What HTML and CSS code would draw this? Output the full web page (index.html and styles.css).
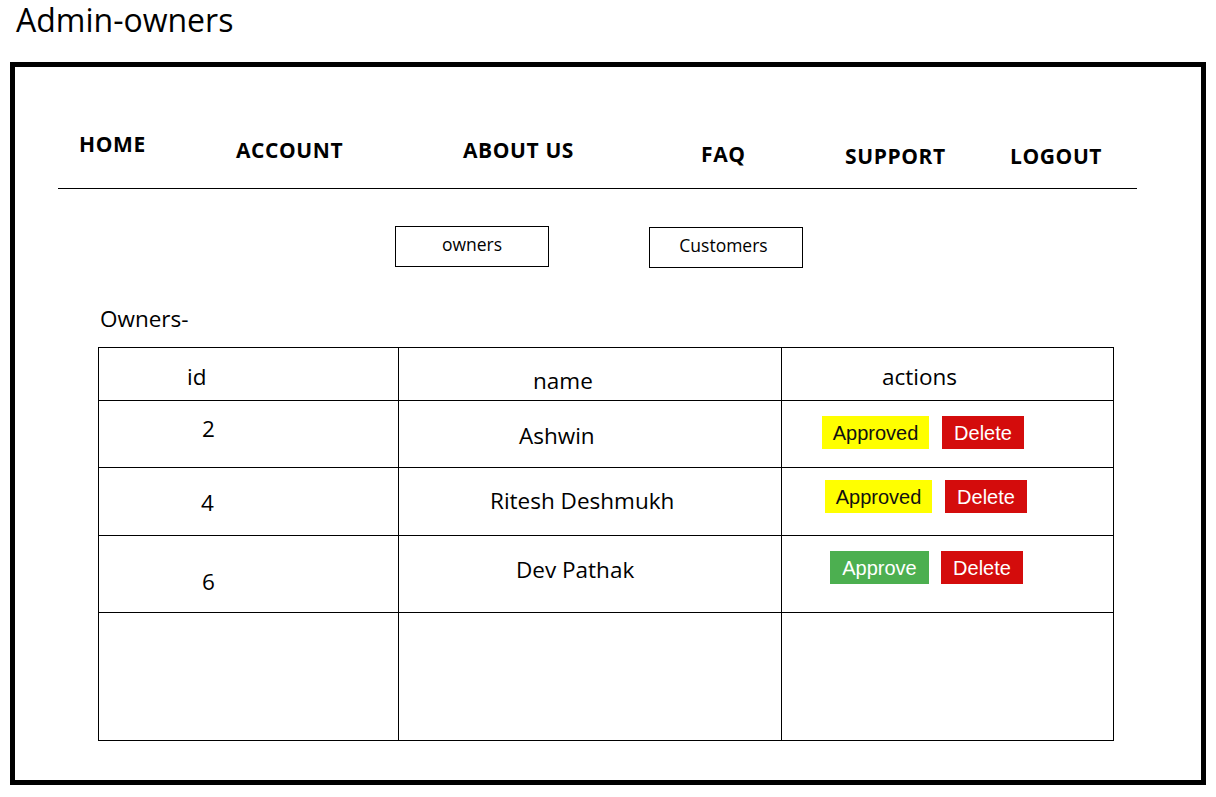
FILE: index.html
```html
<!DOCTYPE html>
<html lang="en">
<head>
<meta charset="utf-8">
<title>Admin-owners</title>
<link rel="stylesheet" href="styles.css">
</head>
<body>
<h1 class="page-title">Admin-owners</h1>
<div class="frame">
  <nav class="nav">
    <a class="nav-item n-home">HOME</a>
    <a class="nav-item n-account">ACCOUNT</a>
    <a class="nav-item n-about">ABOUT US</a>
    <a class="nav-item n-faq">FAQ</a>
    <a class="nav-item n-support">SUPPORT</a>
    <a class="nav-item n-logout">LOGOUT</a>
  </nav>
  <div class="nav-rule"></div>
  <div class="tabs">
    <button class="tab tab-owners">owners</button>
    <button class="tab tab-customers">Customers</button>
  </div>
  <div class="section-label">Owners-</div>
  <div class="grid">
    <div class="cell"><span class="txt h-id">id</span></div>
    <div class="cell"><span class="txt h-name">name</span></div>
    <div class="cell"><span class="txt h-actions">actions</span></div>

    <div class="cell"><span class="txt r1-id">2</span></div>
    <div class="cell"><span class="txt r1-name">Ashwin</span></div>
    <div class="cell"><div class="actions r1-act"><span class="btn btn-approved">Approved</span><span class="btn btn-delete">Delete</span></div></div>

    <div class="cell"><span class="txt r2-id">4</span></div>
    <div class="cell"><span class="txt r2-name">Ritesh Deshmukh</span></div>
    <div class="cell"><div class="actions r2-act"><span class="btn btn-approved">Approved</span><span class="btn btn-delete">Delete</span></div></div>

    <div class="cell"><span class="txt r3-id">6</span></div>
    <div class="cell"><span class="txt r3-name">Dev Pathak</span></div>
    <div class="cell"><div class="actions r3-act"><span class="btn btn-approve">Approve</span><span class="btn btn-delete">Delete</span></div></div>

    <div class="cell"></div>
    <div class="cell"></div>
    <div class="cell"></div>
  </div>
</div>
</body>
</html>
```

FILE: styles.css
```css
* { box-sizing: border-box; }
html, body { margin: 0; padding: 0; background: #fff; }
body {
  font-family: "Open Sans", "Noto Sans", sans-serif;
  color: #000;
  width: 1216px;
  height: 797px;
  overflow: hidden;
}
.page-title {
  margin: 0;
  padding-left: 16px;
  font-weight: 400;
  font-size: 32px;
  line-height: 40px;
  height: 40px;
}
.frame {
  margin: 22px 0 0 10px;
  width: 1196px;
  height: 723px;
  border: 5px solid #000;
}
.nav {
  display: flex;
  align-items: flex-start;
  height: 121px;
  padding: 65px 0 0 64px;
}
.nav-item {
  font-weight: 700;
  font-size: 21px;
  letter-spacing: 0.6px;
  line-height: 24px;
  white-space: nowrap;
}
.n-home { width: 157px; }
.n-account { width: 227px; margin-top: 6px; }
.n-about { width: 238px; margin-top: 6px; }
.n-faq { width: 144px; margin-top: 10px; }
.n-support { width: 165px; margin-top: 12px; }
.n-logout { margin-top: 12px; }
.nav-rule {
  margin-left: 43px;
  width: 1079px;
  border-top: 1px solid #000;
}
.tabs {
  display: flex;
  align-items: flex-start;
  gap: 100px;
  margin-top: 37px;
  padding-left: 380px;
}
.tab {
  width: 154px;
  height: 41px;
  border: 1px solid #000;
  background: #fff;
  font-family: "Open Sans", "Noto Sans", sans-serif;
  font-size: 17.5px;
  color: #000;
  padding: 0 0 5px 0;
  line-height: 24px;
}
.tab-customers { margin-top: 1px; padding-right: 5px; }
.section-label {
  margin-top: 37px;
  padding-left: 85px;
  font-size: 22.5px;
  line-height: 28px;
}
.grid {
  margin: 14px 0 0 83px;
  display: grid;
  grid-template-columns: 300px 383px 332px;
  grid-template-rows: 53px 67px 68px 77px 128px;
  width: 1016px;
  border-top: 1px solid #000;
  border-left: 1px solid #000;
}
.cell {
  border-right: 1px solid #000;
  border-bottom: 1px solid #000;
}
.txt {
  display: block;
  font-size: 22.5px;
  line-height: 28px;
  white-space: nowrap;
}
.h-id { padding: 15px 0 0 88px; }
.h-name { padding: 19px 0 0 134px; }
.h-actions { padding: 15px 0 0 100px; }
.r1-id { padding: 14px 0 0 103px; }
.r1-name { padding: 21px 0 0 120px; }
.r2-id { padding: 21px 0 0 102px; }
.r2-name { padding: 19px 0 0 91px; }
.r3-id { padding: 32px 0 0 103px; }
.r3-name { padding: 20px 0 0 117px; }
.actions { display: flex; }
.r1-act { padding: 15px 0 0 40px; gap: 13px; }
.r2-act { padding: 12px 0 0 43px; gap: 13px; }
.r3-act { padding: 15px 0 0 48px; gap: 12px; }
.btn {
  display: block;
  height: 33px;
  line-height: 35px;
  text-align: center;
  font-family: "Liberation Sans", Arial, sans-serif;
  font-size: 20px;
}
.btn-approved { width: 107px; background: #ffff00; color: #111; }
.btn-approve { width: 99px; background: #4caf50; color: #fff; }
.btn-delete { width: 82px; background: #d40c0c; color: #fff; }
```
